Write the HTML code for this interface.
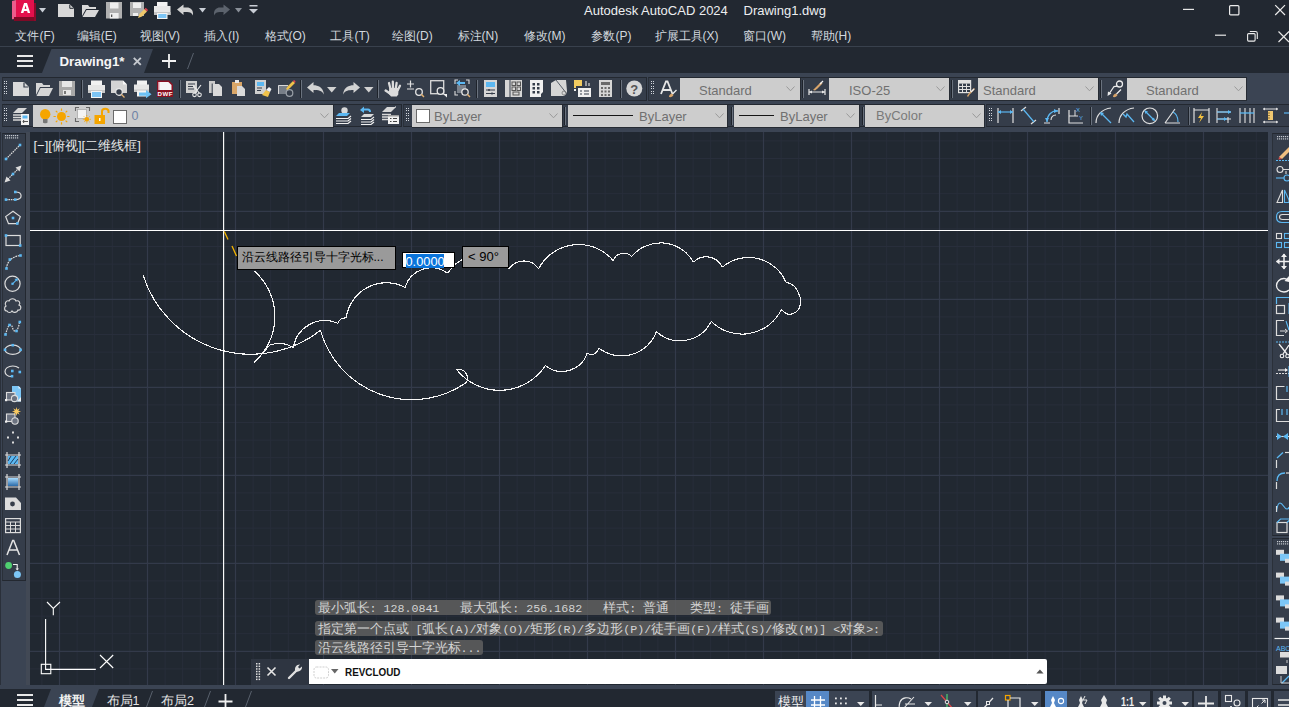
<!DOCTYPE html><html><head><meta charset="utf-8"><style>
*{box-sizing:border-box;margin:0;padding:0}
html,body{width:1289px;height:707px;overflow:hidden;background:#222831;font-family:"Liberation Sans",sans-serif;color:#d8dde3}
.a{position:absolute}
.t{position:absolute;white-space:nowrap;line-height:1}
svg{position:absolute;overflow:visible}
.mi{position:absolute;top:30px;font-size:12px;color:#d2d8df;white-space:nowrap;line-height:12px}
.tb{position:absolute;background:#363e4b;border:1px solid #262c35}
.cb{position:absolute;background:#cdcdcd;border-bottom:1px solid #2a2f37;border-right:1px solid #2a2f37}
.cbt{position:absolute;font-size:13px;color:#6f6f6f;white-space:nowrap;line-height:13px}
.sep{position:absolute;width:1px;background:#1c2128;border-right:1px solid #4a5363}
.hl{position:absolute;border-radius:3px;background:rgba(95,95,95,0.85)}
.ht{position:absolute;font-family:"Liberation Mono",monospace;font-size:11.65px;color:#d4d4d4;white-space:pre;line-height:13px}
.sg{position:absolute;top:691px;height:16px;background:#3b4453}
.tip{position:absolute;background:#9a9a9a;border:1px solid #000;color:#000;font-size:13px;white-space:nowrap;line-height:13px}
</style></head><body>
<div class="a" style="left:0;top:46px;width:1289px;height:1px;background:#39414d"></div>
<div class="a" style="left:0;top:73px;width:1289px;height:616px;background:#3b4453"></div>
<div class="a" style="left:30px;top:132px;width:1238px;height:553px;background:#212831"></div>
<div class="a" style="left:0;top:689px;width:1289px;height:18px;background:#222831"></div>
<div class="a" style="left:0;top:132px;width:1px;height:553px;background:#2a303a"></div>
<div class="a" style="left:26px;top:132px;width:4px;height:553px;background:#424955"></div>
<svg class="a" style="left:0;top:0" width="1289" height="707" viewBox="0 0 1289 707">
<defs><clipPath id="dc"><rect x="30" y="132" width="1238" height="553"/></clipPath></defs>
<g clip-path="url(#dc)">
<path d="M41.90 132V685 M77.10 132V685 M94.70 132V685 M112.30 132V685 M129.90 132V685 M165.10 132V685 M182.70 132V685 M200.30 132V685 M217.90 132V685 M253.10 132V685 M270.70 132V685 M288.30 132V685 M305.90 132V685 M341.10 132V685 M358.70 132V685 M376.30 132V685 M393.90 132V685 M429.10 132V685 M446.70 132V685 M464.30 132V685 M481.90 132V685 M517.10 132V685 M534.70 132V685 M552.30 132V685 M569.90 132V685 M605.10 132V685 M622.70 132V685 M640.30 132V685 M657.90 132V685 M693.10 132V685 M710.70 132V685 M728.30 132V685 M745.90 132V685 M781.10 132V685 M798.70 132V685 M816.30 132V685 M833.90 132V685 M869.10 132V685 M886.70 132V685 M904.30 132V685 M921.90 132V685 M957.10 132V685 M974.70 132V685 M992.30 132V685 M1009.90 132V685 M1045.10 132V685 M1062.70 132V685 M1080.30 132V685 M1097.90 132V685 M1133.10 132V685 M1150.70 132V685 M1168.30 132V685 M1185.90 132V685 M1221.10 132V685 M1238.70 132V685 M1256.30 132V685 M30 140.90H1268 M30 158.50H1268 M30 176.10H1268 M30 193.70H1268 M30 228.90H1268 M30 246.50H1268 M30 264.10H1268 M30 281.70H1268 M30 316.90H1268 M30 334.50H1268 M30 352.10H1268 M30 369.70H1268 M30 404.90H1268 M30 422.50H1268 M30 440.10H1268 M30 457.70H1268 M30 492.90H1268 M30 510.50H1268 M30 528.10H1268 M30 545.70H1268 M30 580.90H1268 M30 598.50H1268 M30 616.10H1268 M30 633.70H1268 M30 668.90H1268" stroke="#282e3b" stroke-width="1" fill="none"/>
<path d="M59.50 132V685 M147.50 132V685 M235.50 132V685 M323.50 132V685 M411.50 132V685 M499.50 132V685 M587.50 132V685 M675.50 132V685 M763.50 132V685 M851.50 132V685 M939.50 132V685 M1027.50 132V685 M1115.50 132V685 M1203.50 132V685 M30 211.30H1268 M30 299.30H1268 M30 387.30H1268 M30 475.30H1268 M30 563.30H1268 M30 651.30H1268" stroke="#333a4a" stroke-width="1.2" fill="none"/>
<path d="M143.10,275.10 A113.16,113.16 0 0 0 320.50,330.40 M320.50,330.40 A94.89,94.89 0 0 0 466.50,382.40 M466.50,382.40 A9.05,9.05 0 0 0 456.50,369.50 M456.50,369.50 A54.90,54.90 0 0 0 545.40,365.60 M545.40,365.60 A26.57,26.57 0 0 0 587.30,353.00 M587.30,353.00 A6.90,6.90 0 0 0 598.40,347.70 M598.40,347.70 A36.99,36.99 0 0 0 656.40,331.60 M656.40,331.60 A34.82,34.82 0 0 0 711.20,321.40 M711.20,321.40 A43.82,43.82 0 0 0 781.30,309.80 M781.3,309.8 C782.2,310.4 784.9,312.8 786.5,313.5 C788.1,314.2 789.0,314.9 791.0,314.3 C793.0,313.7 796.8,311.8 798.4,309.8 C800.0,307.8 800.4,304.6 800.6,302.4 C800.9,300.2 801.0,299.1 799.9,296.4 C798.8,293.7 796.4,288.4 794.0,286.0 C791.6,283.6 787.2,282.6 785.8,281.9 M785.80,281.90 A40.40,40.40 0 0 0 722.40,267.20 M722.40,267.20 A17.85,17.85 0 0 0 693.50,262.20 M693.50,262.20 A37.70,37.70 0 0 0 631.70,256.40 M631.70,256.40 A11.50,11.50 0 0 0 613.10,260.40 M613.10,260.40 A45.26,45.26 0 0 0 538.60,268.80 M538.60,268.80 A17.83,17.83 0 0 0 509.10,268.80 M509.1,268.8 C507.6,267.0 503.9,260.8 500.0,258.0 C496.1,255.2 490.7,252.8 486.0,252.0 C481.3,251.2 476.1,251.7 472.0,253.0 C467.9,254.3 464.4,258.1 461.6,260.0 C458.9,261.9 457.9,262.0 455.5,264.2 C453.1,266.4 448.8,271.7 447.5,273.2 M447.50,273.20 A27.30,27.30 0 0 0 405.10,287.40 M405.10,287.40 A40.46,40.46 0 0 0 346.20,317.90 M346.20,317.90 A8.51,8.51 0 0 0 337.70,323.30 M337.70,323.30 A31.71,31.71 0 0 0 293.40,347.80 M293.40,347.80 A26.58,26.58 0 0 0 269.60,345.20 M269.6,345.2 C267.1,348.1 256.9,359.5 254.3,362.4 M254.30,362.20 A60.71,60.71 0 0 0 254.50,271.20" stroke="#f6f6f6" stroke-width="1.1" fill="none" shape-rendering="crispEdges" stroke-linejoin="miter"/>
<path d="M223.6 132V685" stroke="#ffffff" stroke-width="1.15"/>
<path d="M30 230.5H1268" stroke="#ffffff" stroke-width="1.15"/>
<path d="M224.3 231.5L228 239.5M232 246L236.5 256" stroke="#f4b400" stroke-width="1.3"/>
<g stroke="#ffffff" stroke-width="1.1" fill="none"><rect x="41.3" y="664.3" width="9.5" height="9.4"/><path d="M45.6 619V669.4H95.8"/><path d="M47 602L53.3 608.4L60 602M53.3 608.4V615.2"/><path d="M100 655L113.2 668M113.2 655L100 668"/></g>
</g></svg>
<svg class="a" style="left:11px;top:0px" width="27" height="22" viewBox="0 0 27 22" ><path d="M1 1L5 0V17L2 19.5L1 19Z" fill="#ec5c8c"/><rect x="3" y="17" width="22" height="4" fill="#7e0a26"/><rect x="23" y="3" width="2" height="18" fill="#8c0a2b"/><rect x="5" y="0" width="18" height="17" fill="#e3104c"/><path d="M9.8 13.1L13.1 2.9H16L19.2 13.1H16.7L16.1 11H13L12.4 13.1ZM13.6 8.9H15.5L14.55 5.5Z" fill="#fff"/></svg>
<svg class="a" style="left:39px;top:8px" width="8" height="5" viewBox="0 0 8 5" ><path d="M0 0H7L3.5 4.5Z" fill="#c9ced6"/></svg>
<svg class="a" style="left:58px;top:4px" width="17" height="13" viewBox="0 0 17 13" ><path d="M0 0H11.5L16 4.5V13H0Z" fill="#d8d8d8"/><path d="M11.8 0.6V4.3H15.5" fill="none" stroke="#222831" stroke-width="1"/></svg>
<svg class="a" style="left:82px;top:4px" width="17" height="13" viewBox="0 0 17 13" ><path d="M0 1H6L7.5 3H14V5H4L0 12Z" fill="#d8d8d8"/><path d="M4.5 6H17L13 13H0.5Z" fill="#d8d8d8"/></svg>
<svg class="a" style="left:106px;top:2px" width="16" height="17" viewBox="0 0 16 17" ><path d="M0 0H16V16.5H0Z" fill="#b0b0b0"/><rect x="4" y="0.5" width="8.5" height="6" fill="#eeeeee"/><rect x="3.8" y="11" width="8.8" height="5.5" fill="#eeeeee"/><rect x="5" y="12.5" width="1.3" height="2.5" fill="#555"/></svg>
<svg class="a" style="left:130px;top:2px" width="18" height="17" viewBox="0 0 18 17" ><path d="M0 0H14V14H0Z" fill="#b0b0b0"/><rect x="3" y="0.5" width="8" height="5.5" fill="#eeeeee"/><rect x="3" y="11" width="5" height="3" fill="#eeeeee"/><path d="M8 16L9.5 12L14.5 7L17 9.5L12 14.5Z" fill="#f0c86a"/><path d="M14.5 7L15.7 5.8L18 8L17 9.5Z" fill="#e04050"/></svg>
<svg class="a" style="left:154px;top:1px" width="17" height="18" viewBox="0 0 17 18" ><rect x="3" y="1" width="10.5" height="5" fill="#f2f2f2"/><rect x="0" y="5" width="16.5" height="9" fill="#e8e8e8"/><rect x="0" y="11" width="16.5" height="3" fill="#c4c4c4"/><rect x="3" y="12" width="10.5" height="6" fill="#f4f4f4"/><rect x="4.2" y="13" width="8.2" height="4" fill="#7cc4f4"/></svg>
<svg class="a" style="left:177px;top:4px" width="18" height="13" viewBox="0 0 18 13" ><path d="M0 5.5L6.5 0.5V3.5H10C13.5 3.5 16 6 16 9.5V11.5C15 9 13 8 10 8H6.5V11Z" fill="#d2d2d2"/></svg>
<svg class="a" style="left:199px;top:8px" width="8" height="5" viewBox="0 0 8 5" ><path d="M0 0H7L3.5 4.5Z" fill="#c9ced6"/></svg>
<svg class="a" style="left:213px;top:4px" width="18" height="13" viewBox="0 0 18 13" ><path d="M17 5.5L10.5 0.5V3.5H7C3.5 3.5 1 6 1 9.5V11.5C2 9 4 8 7 8H10.5V11Z" fill="#5c636d"/></svg>
<svg class="a" style="left:235px;top:8px" width="8" height="5" viewBox="0 0 8 5" ><path d="M0 0H7L3.5 4.5Z" fill="#8a9099"/></svg>
<svg class="a" style="left:249px;top:5px" width="10" height="9" viewBox="0 0 10 9" ><rect x="0.5" y="0" width="8" height="1.5" fill="#c9ced6"/><path d="M0 4H9L4.5 8.5Z" fill="#c9ced6"/></svg>
<div class="t" style="left:584px;top:3.5px;font-size:13px;color:#eceef0">Autodesk AutoCAD 2024</div>
<div class="t" style="left:743.5px;top:3.5px;font-size:13px;color:#eceef0">Drawing1.dwg</div>
<svg class="a" style="left:1182px;top:8px" width="14" height="3" viewBox="0 0 14 3" ><rect x="1" y="0.8" width="11" height="1.2" fill="#e6e6e6"/></svg>
<svg class="a" style="left:1228px;top:4px" width="13" height="13" viewBox="0 0 13 13" ><rect x="1.6" y="1.6" width="9.3" height="9.3" rx="1" fill="none" stroke="#ececec" stroke-width="1.2"/></svg>
<svg class="a" style="left:1273px;top:3px" width="15" height="15" viewBox="0 0 15 15" ><path d="M2.2 2.2L12 12M12 2.2L2.2 12" stroke="#ececec" stroke-width="1.2"/></svg>
<svg class="a" style="left:1214px;top:34px" width="13" height="3" viewBox="0 0 13 3" ><rect x="1" y="0.6" width="11" height="1.2" fill="#e6e6e6"/></svg>
<svg class="a" style="left:1246px;top:30px" width="13" height="13" viewBox="0 0 13 13" ><rect x="1.6" y="3.6" width="7.5" height="7.5" rx="1" fill="none" stroke="#ececec" stroke-width="1.1"/><path d="M3.8 1.5H9.5C10.5 1.5 11.3 2.3 11.3 3.3V9" fill="none" stroke="#ececec" stroke-width="1.1"/></svg>
<svg class="a" style="left:1277px;top:30px" width="14" height="13" viewBox="0 0 14 13" ><path d="M1.5 1.5L12 12M12 1.5L1.5 12" stroke="#e6e6e6" stroke-width="1.2"/></svg>
<div class="mi" style="left:15.4px">文件(F)</div>
<div class="mi" style="left:76.8px">编辑(E)</div>
<div class="mi" style="left:140.0px">视图(V)</div>
<div class="mi" style="left:204.0px">插入(I)</div>
<div class="mi" style="left:264.5px">格式(O)</div>
<div class="mi" style="left:330.4px">工具(T)</div>
<div class="mi" style="left:392.0px">绘图(D)</div>
<div class="mi" style="left:457.6px">标注(N)</div>
<div class="mi" style="left:523.5px">修改(M)</div>
<div class="mi" style="left:591.4px">参数(P)</div>
<div class="mi" style="left:654.6px">扩展工具(X)</div>
<div class="mi" style="left:742.7px">窗口(W)</div>
<div class="mi" style="left:810.6px">帮助(H)</div>
<svg class="a" style="left:17px;top:55px" width="17" height="13" viewBox="0 0 17 13" ><rect x="0" y="0" width="16" height="2" fill="#e8e8e8"/><rect x="0" y="5" width="16" height="2" fill="#e8e8e8"/><rect x="0" y="10" width="16" height="2" fill="#e8e8e8"/></svg>
<svg class="a" style="left:40px;top:49px" width="116" height="25" viewBox="0 0 116 25" ><path d="M11.5 0H113L104 24H2Z" fill="#3b4453"/></svg>
<div class="t" style="left:59.5px;top:54.5px;font-size:13.3px;font-weight:bold;color:#f6f6f6">Drawing1*</div>
<svg class="a" style="left:132px;top:56px" width="10" height="10" viewBox="0 0 10 10" ><path d="M1.8 1.8L8.8 8.8M8.8 1.8L1.8 8.8" stroke="#c4c8ce" stroke-width="1.9"/></svg>
<svg class="a" style="left:161px;top:53px" width="16" height="16" viewBox="0 0 16 16" ><path d="M8 1V15M1 8H15" stroke="#f2f2f2" stroke-width="1.8"/></svg>
<svg class="a" style="left:186px;top:52px" width="9" height="18" viewBox="0 0 9 18" ><path d="M7.5 1L1.5 17" stroke="#59616d" stroke-width="1"/></svg>
<div class="a" style="left:2px;top:77px;width:645px;height:24px;background:#353d4a;border:1px solid #232830;border-left-color:#2a3039"></div>
<div class="a" style="left:648px;top:77px;width:599px;height:24px;background:#353d4a;border:1px solid #232830;border-left-color:#2a3039"></div>
<svg class="a" style="left:0;top:0" width="1289" height="707" viewBox="0 0 1289 707"><rect x="4" y="81" width="1" height="1" fill="#d4d8de"/><rect x="6" y="81" width="1" height="1" fill="#d4d8de"/><rect x="4" y="83" width="1" height="1" fill="#d4d8de"/><rect x="6" y="83" width="1" height="1" fill="#d4d8de"/><rect x="4" y="86" width="1" height="1" fill="#d4d8de"/><rect x="6" y="86" width="1" height="1" fill="#d4d8de"/><rect x="4" y="88" width="1" height="1" fill="#d4d8de"/><rect x="6" y="88" width="1" height="1" fill="#d4d8de"/><rect x="4" y="91" width="1" height="1" fill="#d4d8de"/><rect x="6" y="91" width="1" height="1" fill="#d4d8de"/><rect x="4" y="93" width="1" height="1" fill="#d4d8de"/><rect x="6" y="93" width="1" height="1" fill="#d4d8de"/></svg>
<svg class="a" style="left:13px;top:80px" width="17" height="17" viewBox="0 0 17 17" ><path d="M0 2H11L16 7V16H0Z" fill="#dadada"/><path d="M11 2.5V7H15.5" fill="none" stroke="#353d4a" stroke-width="1.2"/></svg>
<svg class="a" style="left:36px;top:80px" width="17" height="17" viewBox="0 0 17 17" ><path d="M0 3H6L7.5 5H14V7H4L0 15Z" fill="#d6d6d6"/><path d="M4.5 8H17L13 16H0.5Z" fill="#d6d6d6"/></svg>
<svg class="a" style="left:59px;top:80px" width="17" height="17" viewBox="0 0 17 17" ><path d="M0 1H16V16H0Z" fill="#a8a8a8"/><rect x="3" y="1" width="10" height="6" fill="#e6e6e6"/><rect x="4" y="10" width="8" height="5" fill="#e6e6e6"/><rect x="5" y="11" width="2" height="3" fill="#777"/></svg>
<div class="a" style="left:81px;top:80px;width:2px;height:18px;background:#1e232b;border-right:1px solid #6a727e"></div>
<svg class="a" style="left:88px;top:80px" width="17" height="18" viewBox="0 0 17 18" ><rect x="3" y="0.5" width="11" height="5" fill="#f2f2f2"/><rect x="0" y="5" width="17" height="8" fill="#e6e6e6"/><rect x="0" y="10" width="17" height="3" fill="#c8c8c8"/><rect x="3" y="11" width="11" height="7" fill="#f4f4f4"/><rect x="4" y="12" width="9" height="5" fill="#7cc4f4"/></svg>
<svg class="a" style="left:111px;top:80px" width="17" height="18" viewBox="0 0 17 18" ><path d="M0 0.5H12L16 4.5V13H0Z" fill="#d4d4d4"/><path d="M12 0.5L16 4.5H12Z" fill="#f8f8f8"/><circle cx="8" cy="12" r="3.3" fill="#353d4a" stroke="#e8e8e8" stroke-width="1.2"/><path d="M10.4 14.4L13.5 17.5" stroke="#e2b070" stroke-width="1.3"/></svg>
<svg class="a" style="left:134px;top:80px" width="18" height="18" viewBox="0 0 18 18" ><rect x="3" y="0.5" width="10" height="4.5" fill="#f2f2f2"/><rect x="0" y="4.5" width="15" height="7.5" fill="#e6e6e6"/><rect x="0" y="9.5" width="15" height="2.5" fill="#c8c8c8"/><rect x="3" y="10.5" width="9" height="6" fill="#f4f4f4"/><path d="M5 12.5H12V10L17.5 14.2L12 18.2V15.8H5Z" fill="#6cc0f4"/></svg>
<svg class="a" style="left:157px;top:80px" width="17" height="18" viewBox="0 0 17 18" ><path d="M0 0.5H12L16 4.5V17H0Z" fill="#8a1022"/><path d="M1.5 2H11.4L14.5 5.1V10H1.5Z" fill="#f6f6f6"/><rect x="1.5" y="2" width="1" height="8" fill="#e8a0b0"/><text x="8.2" y="15.6" font-size="6.2" font-weight="bold" fill="#fff" text-anchor="middle" font-family="Liberation Sans" letter-spacing="0.4">DWF</text></svg>
<div class="a" style="left:179px;top:80px;width:2px;height:18px;background:#1e232b;border-right:1px solid #6a727e"></div>
<svg class="a" style="left:186px;top:80px" width="17" height="17" viewBox="0 0 17 17" ><path d="M0 1H11V13H0Z" fill="#d0d0d0"/><path d="M2 4H9M2 6.5H7M2 9H8" stroke="#353d4a" stroke-width="1"/><path d="M7 5L13.5 13.5M15 5L8.5 13.5" stroke="#e8e8e8" stroke-width="1.2"/><circle cx="8.5" cy="14.8" r="1.8" fill="none" stroke="#e8e8e8" stroke-width="1.1"/><circle cx="13.5" cy="14.8" r="1.8" fill="none" stroke="#e8e8e8" stroke-width="1.1"/></svg>
<svg class="a" style="left:209px;top:80px" width="14" height="17" viewBox="0 0 14 17" ><path d="M0 1H6V13H0Z" fill="#c9c9c9"/><path d="M4 4H10L13 7V16H4Z" fill="#dadada"/><path d="M3.2 3.5V14.5" stroke="#353d4a" stroke-width="1"/></svg>
<svg class="a" style="left:232px;top:79px" width="14" height="18" viewBox="0 0 14 18" ><path d="M0 3H10V15H0Z" fill="#d9a668"/><rect x="3" y="1" width="4" height="3" fill="#e8e8e8"/><path d="M5 7H10L13 10V17H5Z" fill="#dadada"/></svg>
<svg class="a" style="left:255px;top:80px" width="17" height="17" viewBox="0 0 17 17" ><path d="M0 0H11V14H0Z" fill="#d0d0d0"/><rect x="2" y="2" width="7" height="4" fill="#5cb8f2"/><path d="M2 8H7M2 10.5H6" stroke="#353d4a" stroke-width="1"/><path d="M7 15L11 10L15 12L13 17Z" fill="#f0c24a"/><path d="M11 10L14 7L16.5 9L15 12Z" fill="#f4f4f4"/></svg>
<svg class="a" style="left:278px;top:80px" width="17" height="17" viewBox="0 0 17 17" ><path d="M0 5H10V14H0Z" fill="#777e88"/><path d="M0.5 5.5H10M0.5 5.5V14" fill="none" stroke="#d8d8d8" stroke-width="1"/><circle cx="11.5" cy="13" r="3.3" fill="#353d4a" stroke="#9aa0a8" stroke-width="1.2"/><path d="M8 9L10 6L15 1L17 3L12 8L9.5 10Z" fill="#f0c24a"/><path d="M15 1L16 0L17.5 1.3L17 3Z" fill="#e04050"/></svg>
<div class="a" style="left:300px;top:80px;width:2px;height:18px;background:#1e232b;border-right:1px solid #6a727e"></div>
<svg class="a" style="left:307px;top:82px" width="17" height="13" viewBox="0 0 17 13" ><path d="M0 5.5L6.5 0V3.3C11 3.3 16 5 17 12.5C15 8.5 11 8 6.5 8V11Z" fill="#d2d2d2"/></svg>
<svg class="a" style="left:327px;top:87px" width="10" height="6" viewBox="0 0 10 6" ><path d="M0 0H9.5L4.75 5.5Z" fill="#d2d2d2"/></svg>
<svg class="a" style="left:343px;top:82px" width="17" height="13" viewBox="0 0 17 13" ><path d="M17 5.5L10.5 0V3.3C6 3.3 1 5 0 12.5C2 8.5 6 8 10.5 8V11Z" fill="#d2d2d2"/></svg>
<svg class="a" style="left:364px;top:87px" width="10" height="6" viewBox="0 0 10 6" ><path d="M0 0H9.5L4.75 5.5Z" fill="#d2d2d2"/></svg>
<div class="a" style="left:377px;top:80px;width:2px;height:18px;background:#1e232b;border-right:1px solid #6a727e"></div>
<svg class="a" style="left:380px;top:76px" width="24" height="24" viewBox="0 0 24 24" ><g stroke="#dcdcdc" stroke-linecap="round" fill="none"><path d="M9 7L10.5 13M12.8 5.6L13 12.5M16.6 6.8L15.8 12.5M20 9.8L17.8 14" stroke-width="2.3"/><path d="M5.6 14.6L10 17.6" stroke-width="2.4"/></g><path d="M9.5 12H18.6L18.2 18.5L16.8 20.6H11L8.5 17.5Z" fill="#dcdcdc"/></svg>
<svg class="a" style="left:407px;top:80px" width="18" height="18" viewBox="0 0 18 18" ><path d="M0 4H7M3.5 0.5V7.5M0 9H7" stroke="#e0e0e0" stroke-width="1.2"/><circle cx="12" cy="12" r="3.3" fill="none" stroke="#e6e6e6" stroke-width="1.3"/><path d="M14.3 14.3L17 17" stroke="#e2b070" stroke-width="1.5"/></svg>
<svg class="a" style="left:430px;top:80px" width="18" height="18" viewBox="0 0 18 18" ><rect x="0.7" y="0.7" width="13" height="13" fill="none" stroke="#dcdcdc" stroke-width="1.3"/><circle cx="10.5" cy="11" r="3.3" fill="#353d4a" stroke="#e6e6e6" stroke-width="1.3"/><path d="M13 14L17 17.5V14Z" fill="#f0f0f0"/></svg>
<svg class="a" style="left:454px;top:79px" width="18" height="19" viewBox="0 0 18 19" ><path d="M1 5V1H4M12 1H15V5M1 12V16H4" fill="none" stroke="#dcdcdc" stroke-width="1.1"/><rect x="3" y="6" width="9" height="8" fill="#7b828c"/><path d="M2 4L6 1V3H11V5H6V7Z" fill="#5cb8f2"/><circle cx="11" cy="13" r="3.2" fill="#353d4a" stroke="#e6e6e6" stroke-width="1.3"/><path d="M13.3 15.3L16 18" stroke="#e2b070" stroke-width="1.4"/></svg>
<div class="a" style="left:476px;top:80px;width:2px;height:18px;background:#1e232b;border-right:1px solid #6a727e"></div>
<svg class="a" style="left:484px;top:80px" width="14" height="17" viewBox="0 0 14 17" ><path d="M0 0H13V17H0Z" fill="#d6d6d6"/><rect x="2" y="2" width="9" height="5" fill="#5cb8f2"/><path d="M2 10H11M2 13.5H11" stroke="#353d4a" stroke-width="1"/><path d="M5 9V11M8 12.5V14.5" stroke="#353d4a" stroke-width="1.4"/></svg>
<svg class="a" style="left:505px;top:80px" width="18" height="17" viewBox="0 0 18 17" ><path d="M0 0H17V17H0Z" fill="#d6d6d6"/><path d="M5 0V17" stroke="#353d4a" stroke-width="1"/><rect x="7" y="2" width="3.5" height="3.5" fill="none" stroke="#555" stroke-width="1"/><rect x="12" y="2" width="3.5" height="3.5" fill="none" stroke="#555" stroke-width="1"/><rect x="7" y="7" width="3.5" height="3.5" fill="none" stroke="#555" stroke-width="1"/><rect x="12" y="7" width="3.5" height="3.5" fill="none" stroke="#555" stroke-width="1"/><rect x="8" y="12" width="6" height="3" fill="none" stroke="#555" stroke-width="1"/></svg>
<svg class="a" style="left:530px;top:80px" width="14" height="17" viewBox="0 0 14 17" ><path d="M0 0H13V12L11 14V17H0Z" fill="#f0f0f0"/><g fill="#353d4a"><rect x="2.5" y="3" width="2.5" height="2.5"/><rect x="7" y="3" width="2.5" height="2.5"/><rect x="2.5" y="7" width="2.5" height="2.5"/><rect x="7" y="7" width="2.5" height="2.5"/><rect x="2.5" y="11" width="2.5" height="2.5"/><rect x="7" y="11" width="2.5" height="2.5"/></g></svg>
<svg class="a" style="left:551px;top:80px" width="17" height="17" viewBox="0 0 17 17" ><path d="M0 3L5 0H15L16 11C16 14 14 16 11 16H0Z" fill="#d6d6d6"/><path d="M5 0L16 14" stroke="#353d4a" stroke-width="0.8"/><circle cx="13" cy="13" r="2" fill="none" stroke="#7a7a7a" stroke-width="0.8"/></svg>
<svg class="a" style="left:574px;top:80px" width="18" height="17" viewBox="0 0 18 17" ><rect x="0" y="0" width="8" height="8" fill="#f2cc60"/><rect x="2" y="6" width="8" height="6" fill="#353d4a"/><rect x="4" y="8" width="13" height="9" fill="#f0f0f0"/><path d="M6 11H8M6 14H8M10 11H15M10 14H15" stroke="#353d4a" stroke-width="1.2"/><path d="M12 1V6M15 3V6" stroke="#b8b8b8" stroke-width="1.5"/><rect x="0" y="9" width="2" height="2" fill="#f0f0f0"/></svg>
<svg class="a" style="left:599px;top:80px" width="14" height="17" viewBox="0 0 14 17" ><rect x="0" y="0" width="13" height="17" fill="#d6d6d6"/><rect x="2" y="2" width="9" height="3" fill="#6a6a6a"/><g fill="#6a6a6a"><rect x="2" y="7" width="2" height="2"/><rect x="5.5" y="7" width="2" height="2"/><rect x="9" y="7" width="2" height="2"/><rect x="2" y="10.5" width="2" height="2"/><rect x="5.5" y="10.5" width="2" height="2"/><rect x="9" y="10.5" width="2" height="2"/><rect x="2" y="14" width="2" height="2"/><rect x="5.5" y="14" width="2" height="2"/><rect x="9" y="14" width="2" height="2"/></g></svg>
<div class="a" style="left:620px;top:80px;width:2px;height:18px;background:#1e232b;border-right:1px solid #6a727e"></div>
<svg class="a" style="left:626px;top:80px" width="17" height="17" viewBox="0 0 17 17" ><circle cx="8.3" cy="8.5" r="8" fill="#d6d6d6"/><text x="8.3" y="13.5" font-size="13" font-weight="bold" fill="#555" text-anchor="middle" font-family="Liberation Sans">?</text></svg>
<svg class="a" style="left:0;top:0" width="1289" height="707" viewBox="0 0 1289 707"><rect x="651" y="81" width="1" height="1" fill="#d4d8de"/><rect x="653" y="81" width="1" height="1" fill="#d4d8de"/><rect x="651" y="83" width="1" height="1" fill="#d4d8de"/><rect x="653" y="83" width="1" height="1" fill="#d4d8de"/><rect x="651" y="86" width="1" height="1" fill="#d4d8de"/><rect x="653" y="86" width="1" height="1" fill="#d4d8de"/><rect x="651" y="88" width="1" height="1" fill="#d4d8de"/><rect x="653" y="88" width="1" height="1" fill="#d4d8de"/><rect x="651" y="91" width="1" height="1" fill="#d4d8de"/><rect x="653" y="91" width="1" height="1" fill="#d4d8de"/><rect x="651" y="93" width="1" height="1" fill="#d4d8de"/><rect x="653" y="93" width="1" height="1" fill="#d4d8de"/></svg>
<svg class="a" style="left:660px;top:80px" width="17" height="18" viewBox="0 0 17 18" ><path d="M1 14L6 1.5H7.5L12.5 14M3 10H10.5" fill="none" stroke="#e6e6e6" stroke-width="1.8"/><path d="M9 17C9 15 10 14 12 13.5L13.5 15C13 16.5 11 17.5 9 17Z" fill="#d8a46a"/><path d="M12.5 14L16.5 10" stroke="#f0f0f0" stroke-width="1.3"/></svg>
<div class="a" style="left:680px;top:78px;width:121px;height:22.5px;background:#cdcdcd;border-right:1px solid #262b33;border-bottom:1px solid #262b33"></div>
<div class="t" style="left:699px;top:84px;font-size:13px;color:#707070">Standard</div>
<svg class="a" style="left:786px;top:86px" width="9" height="6" viewBox="0 0 9 6" ><path d="M0.5 0.5L4.5 4.8L8.5 0.5" fill="none" stroke="#9a9a9a" stroke-width="1"/></svg>
<div class="a" style="left:802px;top:80px;width:2px;height:18px;background:#1e232b;border-right:1px solid #6a727e"></div>
<svg class="a" style="left:808px;top:80px" width="18" height="17" viewBox="0 0 18 17" ><path d="M1 9V15M17 9V15M1 12H17" stroke="#e8e8e8" stroke-width="1.2"/><path d="M1 12L4 10.5V13.5Z M17 12L14 10.5V13.5Z" fill="#e8e8e8"/><path d="M5 10L8 7L13 2L14.5 3.5L9.5 8.5L7 10.5Z" fill="#d8a46a"/><path d="M12 4L15 1" stroke="#f0f0f0" stroke-width="1.3"/></svg>
<div class="a" style="left:829px;top:78px;width:121px;height:22.5px;background:#cdcdcd;border-right:1px solid #262b33;border-bottom:1px solid #262b33"></div>
<div class="t" style="left:849px;top:84px;font-size:13px;color:#707070">ISO-25</div>
<svg class="a" style="left:936px;top:86px" width="9" height="6" viewBox="0 0 9 6" ><path d="M0.5 0.5L4.5 4.8L8.5 0.5" fill="none" stroke="#9a9a9a" stroke-width="1"/></svg>
<div class="a" style="left:951px;top:80px;width:2px;height:18px;background:#1e232b;border-right:1px solid #6a727e"></div>
<svg class="a" style="left:958px;top:80px" width="17" height="17" viewBox="0 0 17 17" ><rect x="0.6" y="0.6" width="12" height="12" fill="none" stroke="#e0e0e0" stroke-width="1.2"/><rect x="0.6" y="0.6" width="12" height="3" fill="#e0e0e0"/><path d="M0.6 6.5H12.6M0.6 9.5H12.6M4.5 3.6V12.6M8.5 3.6V12.6" stroke="#e0e0e0" stroke-width="1"/><path d="M9 16L11 13L16 8L17 9L12 14L10 17Z" fill="#d8a46a"/><path d="M13 12L16 9" stroke="#f0f0f0" stroke-width="1.2"/></svg>
<div class="a" style="left:978px;top:78px;width:121px;height:22.5px;background:#cdcdcd;border-right:1px solid #262b33;border-bottom:1px solid #262b33"></div>
<div class="t" style="left:983px;top:84px;font-size:13px;color:#707070">Standard</div>
<svg class="a" style="left:1085px;top:86px" width="9" height="6" viewBox="0 0 9 6" ><path d="M0.5 0.5L4.5 4.8L8.5 0.5" fill="none" stroke="#9a9a9a" stroke-width="1"/></svg>
<div class="a" style="left:1100px;top:80px;width:2px;height:18px;background:#1e232b;border-right:1px solid #6a727e"></div>
<svg class="a" style="left:1106px;top:80px" width="18" height="18" viewBox="0 0 18 18" ><circle cx="13.5" cy="4" r="3" fill="none" stroke="#ececec" stroke-width="1.3"/><path d="M11.3 6.2L8 6.5L3 14" fill="none" stroke="#ececec" stroke-width="1.3"/><path d="M1.5 16L2 11.5L5.5 13.5Z" fill="#ececec"/><path d="M7 17C7 15 8 14 10 13.5L11.5 15C11 16.5 9 17.5 7 17Z" fill="#d8a46a"/><path d="M10.5 14L15 9.5" stroke="#f0f0f0" stroke-width="1.3"/></svg>
<div class="a" style="left:1127px;top:78px;width:120px;height:22.5px;background:#cdcdcd;border-right:1px solid #262b33;border-bottom:1px solid #262b33"></div>
<div class="t" style="left:1146px;top:84px;font-size:13px;color:#707070">Standard</div>
<svg class="a" style="left:1234px;top:86px" width="9" height="6" viewBox="0 0 9 6" ><path d="M0.5 0.5L4.5 4.8L8.5 0.5" fill="none" stroke="#9a9a9a" stroke-width="1"/></svg>
<div class="a" style="left:2px;top:104px;width:400px;height:23px;background:#353d4a;border:1px solid #232830;border-left-color:#2a3039"></div>
<div class="a" style="left:403px;top:104px;width:582px;height:23px;background:#353d4a;border:1px solid #232830;border-left-color:#2a3039"></div>
<div class="a" style="left:986px;top:104px;width:309px;height:23px;background:#353d4a;border:1px solid #232830;border-left-color:#2a3039"></div>
<svg class="a" style="left:0;top:0" width="1289" height="707" viewBox="0 0 1289 707"><rect x="4" y="108" width="1" height="1" fill="#d4d8de"/><rect x="6" y="108" width="1" height="1" fill="#d4d8de"/><rect x="4" y="110" width="1" height="1" fill="#d4d8de"/><rect x="6" y="110" width="1" height="1" fill="#d4d8de"/><rect x="4" y="113" width="1" height="1" fill="#d4d8de"/><rect x="6" y="113" width="1" height="1" fill="#d4d8de"/><rect x="4" y="115" width="1" height="1" fill="#d4d8de"/><rect x="6" y="115" width="1" height="1" fill="#d4d8de"/><rect x="4" y="118" width="1" height="1" fill="#d4d8de"/><rect x="6" y="118" width="1" height="1" fill="#d4d8de"/><rect x="4" y="120" width="1" height="1" fill="#d4d8de"/><rect x="6" y="120" width="1" height="1" fill="#d4d8de"/></svg>
<svg class="a" style="left:12px;top:107px" width="18" height="18" viewBox="0 0 18 18" ><path d="M1 6L6 1H15L10 6Z" fill="#d8d8d8"/><path d="M1 8H10M1 10.5H10M1 13H10" stroke="#d8d8d8" stroke-width="1.3"/><rect x="9" y="7" width="8" height="11" fill="#f2f2f2"/><rect x="10.5" y="8.5" width="5" height="3" fill="#5cb8f2"/><path d="M11 14.5H16M12 13L11 14.5L12 16" stroke="#555" stroke-width="1"/></svg>
<div class="a" style="left:33px;top:105px;width:301px;height:22.5px;background:#cdcdcd;border-right:1px solid #262b33;border-bottom:1px solid #262b33"></div>
<svg class="a" style="left:40px;top:109px" width="11" height="16" viewBox="0 0 11 16" ><circle cx="5.2" cy="5.2" r="5.2" fill="#f5a500"/><path d="M3 10H7.5V13.5C7.5 14.5 3 14.5 3 13.5Z" fill="#777"/></svg>
<svg class="a" style="left:53px;top:108px" width="17" height="17" viewBox="0 0 17 17" ><circle cx="8.5" cy="8.5" r="4.5" fill="#f5a500"/><path d="M8.5 0.5V2.8M8.5 14.2V16.5M0.5 8.5H2.8M14.2 8.5H16.5M2.8 2.8L4.4 4.4M12.6 12.6L14.2 14.2M14.2 2.8L12.6 4.4M4.4 12.6L2.8 14.2" stroke="#f5a500" stroke-width="1.2"/></svg>
<svg class="a" style="left:75px;top:107px" width="16" height="17" viewBox="0 0 16 17" ><path d="M0.5 4V0.5H4M11 0.5H14.5V4M0.5 11V14.5H4" fill="none" stroke="#666" stroke-width="1.1"/><rect x="2.5" y="2.5" width="9" height="9" fill="#f4f4f4" stroke="#9a9a9a" stroke-width="0.6"/><circle cx="11.8" cy="12.3" r="2.4" fill="#f5a500"/><path d="M11.8 8.2V9.2M11.8 15.4V16.4M7.8 12.3H8.8M14.8 12.3H15.8M9 9.5L9.7 10.2M14.6 9.5L13.9 10.2M9 15L9.7 14.4M14.6 15L13.9 14.4" stroke="#f5a500" stroke-width="0.9"/></svg>
<svg class="a" style="left:94px;top:107px" width="16" height="17" viewBox="0 0 16 17" ><rect x="0.5" y="8" width="10.5" height="9" fill="#f5a500"/><path d="M8 8V4.2C8 0.8 14.5 0.8 14.5 4.2V6" fill="none" stroke="#f5a500" stroke-width="2"/><rect x="5" y="11" width="1.5" height="3" fill="#fff"/></svg>
<div class="a" style="left:113px;top:110px;width:14px;height:14px;background:#fff;border:1px solid #6b6b6b"></div>
<div class="t" style="left:131.5px;top:110px;font-size:12.5px;color:#6f83a6">0</div>
<svg class="a" style="left:320px;top:113px" width="9" height="6" viewBox="0 0 9 6" ><path d="M0.5 0.5L4.5 4.8L8.5 0.5" fill="none" stroke="#9a9a9a" stroke-width="1"/></svg>
<svg class="a" style="left:335px;top:107px" width="18" height="18" viewBox="0 0 18 18" ><circle cx="9.5" cy="3.5" r="3.2" fill="#d8d8d8"/><path d="M1 9L4 6H15L12 9Z" fill="#5cb8f2"/><path d="M1 11.5H13L16 9M1 14H13L16 11.5M1 16.5H13L16 14" fill="none" stroke="#f0f0f0" stroke-width="1.2"/></svg>
<svg class="a" style="left:359px;top:106px" width="17" height="19" viewBox="0 0 17 19" ><path d="M1 4L5 0.5V2.5H9C11 2.5 12 4 12 6H10C10 5 9.5 4.5 8.5 4.5H5V7Z" fill="#5cb8f2"/><path d="M2 11L5 8H15L12 11Z" fill="#d8d8d8"/><path d="M2 13.5H12L15 11M2 16H12L15 13.5M2 18.5H12L15 16" fill="none" stroke="#f0f0f0" stroke-width="1.2"/></svg>
<svg class="a" style="left:381px;top:106px" width="18" height="19" viewBox="0 0 18 19" ><path d="M1 6L6 1H15L10 6Z" fill="#d8d8d8"/><path d="M1 8.5H10M1 11H10M1 13.5H8" stroke="#d8d8d8" stroke-width="1.3"/><path d="M13 2L15 0.5" stroke="#d8d8d8" stroke-width="1"/><rect x="7" y="9" width="11" height="9" fill="#f2f2f2"/><rect x="7" y="9" width="11" height="1.5" fill="#9a9a9a"/><path d="M9 12.5H10.5M9 15.5H10.5M12 12.5H16M12 15.5H16" stroke="#444" stroke-width="1.1"/></svg>
<svg class="a" style="left:0;top:0" width="1289" height="707" viewBox="0 0 1289 707"><rect x="406" y="108" width="1" height="1" fill="#d4d8de"/><rect x="408" y="108" width="1" height="1" fill="#d4d8de"/><rect x="406" y="110" width="1" height="1" fill="#d4d8de"/><rect x="408" y="110" width="1" height="1" fill="#d4d8de"/><rect x="406" y="113" width="1" height="1" fill="#d4d8de"/><rect x="408" y="113" width="1" height="1" fill="#d4d8de"/><rect x="406" y="115" width="1" height="1" fill="#d4d8de"/><rect x="408" y="115" width="1" height="1" fill="#d4d8de"/><rect x="406" y="118" width="1" height="1" fill="#d4d8de"/><rect x="408" y="118" width="1" height="1" fill="#d4d8de"/><rect x="406" y="120" width="1" height="1" fill="#d4d8de"/><rect x="408" y="120" width="1" height="1" fill="#d4d8de"/></svg>
<div class="a" style="left:412px;top:105px;width:150.5px;height:22.5px;background:#cdcdcd;border-right:1px solid #262b33;border-bottom:1px solid #262b33"></div>
<div class="a" style="left:416px;top:109px;width:14px;height:14px;background:#fff;border:1px solid #6b6b6b"></div>
<div class="t" style="left:434px;top:110px;font-size:13px;color:#707070">ByLayer</div>
<svg class="a" style="left:549px;top:113px" width="9" height="6" viewBox="0 0 9 6" ><path d="M0.5 0.5L4.5 4.8L8.5 0.5" fill="none" stroke="#9a9a9a" stroke-width="1"/></svg>
<div class="a" style="left:564px;top:107px;width:2px;height:18px;background:#1e232b;border-right:1px solid #6a727e"></div>
<div class="a" style="left:568px;top:105px;width:160px;height:22.5px;background:#cdcdcd;border-right:1px solid #262b33;border-bottom:1px solid #262b33"></div>
<div class="a" style="left:573px;top:115px;width:60px;height:1px;background:#151515"></div>
<div class="t" style="left:639px;top:110px;font-size:13px;color:#707070">ByLayer</div>
<svg class="a" style="left:715px;top:113px" width="9" height="6" viewBox="0 0 9 6" ><path d="M0.5 0.5L4.5 4.8L8.5 0.5" fill="none" stroke="#9a9a9a" stroke-width="1"/></svg>
<div class="a" style="left:731px;top:107px;width:2px;height:18px;background:#1e232b;border-right:1px solid #6a727e"></div>
<div class="a" style="left:734px;top:105px;width:126px;height:22.5px;background:#cdcdcd;border-right:1px solid #262b33;border-bottom:1px solid #262b33"></div>
<div class="a" style="left:739px;top:114.5px;width:35px;height:1px;background:#151515"></div>
<div class="t" style="left:780px;top:110px;font-size:13px;color:#707070">ByLayer</div>
<svg class="a" style="left:846px;top:113px" width="9" height="6" viewBox="0 0 9 6" ><path d="M0.5 0.5L4.5 4.8L8.5 0.5" fill="none" stroke="#9a9a9a" stroke-width="1"/></svg>
<div class="a" style="left:862px;top:107px;width:2px;height:18px;background:#1e232b;border-right:1px solid #6a727e"></div>
<div class="a" style="left:865px;top:105px;width:120px;height:22.5px;background:#cdcdcd;border-right:1px solid #262b33;border-bottom:1px solid #262b33"></div>
<div class="t" style="left:876px;top:109px;font-size:13px;color:#7a7a7a">ByColor</div>
<svg class="a" style="left:972px;top:113px" width="9" height="6" viewBox="0 0 9 6" ><path d="M0.5 0.5L4.5 4.8L8.5 0.5" fill="none" stroke="#9a9a9a" stroke-width="1"/></svg>
<svg class="a" style="left:0;top:0" width="1289" height="707" viewBox="0 0 1289 707"><rect x="989" y="108" width="1" height="1" fill="#d4d8de"/><rect x="991" y="108" width="1" height="1" fill="#d4d8de"/><rect x="989" y="110" width="1" height="1" fill="#d4d8de"/><rect x="991" y="110" width="1" height="1" fill="#d4d8de"/><rect x="989" y="113" width="1" height="1" fill="#d4d8de"/><rect x="991" y="113" width="1" height="1" fill="#d4d8de"/><rect x="989" y="115" width="1" height="1" fill="#d4d8de"/><rect x="991" y="115" width="1" height="1" fill="#d4d8de"/><rect x="989" y="118" width="1" height="1" fill="#d4d8de"/><rect x="991" y="118" width="1" height="1" fill="#d4d8de"/><rect x="989" y="120" width="1" height="1" fill="#d4d8de"/><rect x="991" y="120" width="1" height="1" fill="#d4d8de"/></svg>
<svg class="a" style="left:997px;top:107px" width="17" height="17" viewBox="0 0 17 17" ><path d="M1 1V16M16 1V16" stroke="#e0e0e0" stroke-width="1.2"/><path d="M1 5H16" stroke="#5cb8f2" stroke-width="1.2"/><path d="M1 5L4 3V7ZM16 5L13 3V7Z" fill="#5cb8f2"/></svg>
<svg class="a" style="left:1020px;top:107px" width="17" height="17" viewBox="0 0 17 17" ><path d="M1 4L6 0M11 17L16 13" stroke="#e0e0e0" stroke-width="1.2"/><path d="M3 2L14 15" stroke="#5cb8f2" stroke-width="1.2"/></svg>
<svg class="a" style="left:1043px;top:107px" width="18" height="17" viewBox="0 0 18 17" ><path d="M1 16H7M16 1V7" stroke="#e0e0e0" stroke-width="1.2"/><path d="M4 15C4 8 9 3 15 4" fill="none" stroke="#5cb8f2" stroke-width="1.3"/><path d="M8 13C8 10 10 8 13 8" fill="none" stroke="#e0e0e0" stroke-width="1.1"/><path d="M4 15L2 11H6Z M15 4L11 2V6Z" fill="#5cb8f2"/></svg>
<svg class="a" style="left:1066px;top:106px" width="18" height="18" viewBox="0 0 18 18" ><path d="M3 4V17H17M3 10H12" fill="none" stroke="#e0e0e0" stroke-width="1.2"/><path d="M9 4V10" stroke="#e0e0e0" stroke-width="1"/><text x="10" y="6" font-size="6" fill="#5cb8f2" font-family="Liberation Sans">X</text><text x="13" y="14" font-size="6" fill="#5cb8f2" font-family="Liberation Sans">Y</text></svg>
<div class="a" style="left:1090px;top:107px;width:2px;height:18px;background:#1e232b;border-right:1px solid #6a727e"></div>
<svg class="a" style="left:1095px;top:107px" width="18" height="17" viewBox="0 0 18 17" ><path d="M1 16C1 8 7 2 16 1" fill="none" stroke="#e0e0e0" stroke-width="1.2"/><path d="M6 6L16 16" stroke="#5cb8f2" stroke-width="1.3"/><path d="M5 5L9 6L6 9Z" fill="#5cb8f2"/></svg>
<svg class="a" style="left:1118px;top:107px" width="18" height="17" viewBox="0 0 18 17" ><path d="M1 16C1 8 7 2 16 1" fill="none" stroke="#e0e0e0" stroke-width="1.2"/><path d="M5 7L8 10L9 7L16 15" fill="none" stroke="#5cb8f2" stroke-width="1.3"/></svg>
<svg class="a" style="left:1141px;top:107px" width="18" height="18" viewBox="0 0 18 18" ><circle cx="8.8" cy="8.8" r="7.8" fill="none" stroke="#e0e0e0" stroke-width="1.2"/><path d="M4 4L13.5 13.5" stroke="#5cb8f2" stroke-width="1.3"/><path d="M3.5 3.5L7 4.5L4.5 7ZM14 14L10.5 13L13 10.5Z" fill="#5cb8f2"/></svg>
<svg class="a" style="left:1164px;top:107px" width="17" height="17" viewBox="0 0 17 17" ><path d="M1 16H16M1 16L11 2" stroke="#e0e0e0" stroke-width="1.2"/><path d="M9 5C13 7 14 11 14 15" fill="none" stroke="#5cb8f2" stroke-width="1.2"/></svg>
<div class="a" style="left:1188px;top:107px;width:2px;height:18px;background:#1e232b;border-right:1px solid #6a727e"></div>
<svg class="a" style="left:1193px;top:107px" width="17" height="17" viewBox="0 0 17 17" ><path d="M1 1V16M16 1V16M1 3H16" stroke="#e0e0e0" stroke-width="1.2"/><path d="M9 5L5 11H8L6 16L11 9H8Z" fill="#f2c040"/></svg>
<svg class="a" style="left:1216px;top:107px" width="16" height="17" viewBox="0 0 16 17" ><path d="M1 1V16M1 5H15M1 12H15" stroke="#e0e0e0" stroke-width="1.1"/><path d="M12 10V16" stroke="#e0e0e0" stroke-width="1.1"/><path d="M1 5H15M1 12H11" stroke="#5cb8f2" stroke-width="1.2"/><path d="M15 5L12 3V7Z M11 12L8 10V14Z" fill="#5cb8f2"/></svg>
<svg class="a" style="left:1239px;top:107px" width="16" height="17" viewBox="0 0 16 17" ><path d="M1 1V16M6 1V16M11 1V16M15 1V16" stroke="#e0e0e0" stroke-width="1.1"/><path d="M1 6H15" stroke="#5cb8f2" stroke-width="1.3"/></svg>
<svg class="a" style="left:1262px;top:107px" width="17" height="17" viewBox="0 0 17 17" ><path d="M1 2H16M1 15H16" stroke="#e0e0e0" stroke-width="1.2"/><path d="M1 2L3 0.5V3.5ZM16 2L14 0.5V3.5ZM1 15L3 13.5V16.5ZM16 15L14 13.5V16.5Z" fill="#e0e0e0"/><rect x="6" y="4" width="5" height="9" fill="#f0c870"/><path d="M6 6H8M6 8.5H8M6 11H8" stroke="#7a6030" stroke-width="0.8"/></svg>
<svg class="a" style="left:1284px;top:107px" width="5" height="17" viewBox="0 0 5 17" ><path d="M0 6H5" stroke="#5cb8f2" stroke-width="1.2"/></svg>
<div class="a" style="left:2px;top:133px;width:24px;height:448px;background:#353d4a;border:1px solid #232830;border-left-color:#2a3039"></div>
<svg class="a" style="left:5px;top:135px" width="14" height="4" viewBox="0 0 14 4" ><rect x="0.0" y="0.0" width="1.2" height="1.2" fill="#c6cad0"/><rect x="2.0" y="0.0" width="1.2" height="1.2" fill="#c6cad0"/><rect x="4.0" y="0.0" width="1.2" height="1.2" fill="#c6cad0"/><rect x="6.0" y="0.0" width="1.2" height="1.2" fill="#c6cad0"/><rect x="8.0" y="0.0" width="1.2" height="1.2" fill="#c6cad0"/><rect x="10.0" y="0.0" width="1.2" height="1.2" fill="#c6cad0"/><rect x="12.0" y="0.0" width="1.2" height="1.2" fill="#c6cad0"/><rect x="0.0" y="2.3" width="1.2" height="1.2" fill="#c6cad0"/><rect x="2.0" y="2.3" width="1.2" height="1.2" fill="#c6cad0"/><rect x="4.0" y="2.3" width="1.2" height="1.2" fill="#c6cad0"/><rect x="6.0" y="2.3" width="1.2" height="1.2" fill="#c6cad0"/><rect x="8.0" y="2.3" width="1.2" height="1.2" fill="#c6cad0"/><rect x="10.0" y="2.3" width="1.2" height="1.2" fill="#c6cad0"/><rect x="12.0" y="2.3" width="1.2" height="1.2" fill="#c6cad0"/></svg>
<svg class="a" style="left:0;top:0" width="30" height="600" viewBox="0 0 30 600"><path d="M6 159L20 145" stroke="#dcdcdc" stroke-width="1.2" stroke-dasharray="1.6 0.8"/><rect x="4.7" y="157.7" width="2.6" height="2.6" fill="#5cb8f2"/><rect x="18.7" y="143.7" width="2.6" height="2.6" fill="#5cb8f2"/><path d="M6 181L20.5 166.5" stroke="#dcdcdc" stroke-width="1.2" stroke-dasharray="1.6 0.8"/><path d="M21.5 165.5L15.5 167.5L19.5 171.5Z M4.5 182.5L6.5 176.5L10.5 180.5Z" fill="#dcdcdc"/><rect x="11.7" y="172.7" width="2.6" height="2.6" fill="#5cb8f2"/><path d="M6 199.6H15.3" stroke="#dcdcdc" stroke-width="1.2" stroke-dasharray="1.6 0.8"/><path d="M15.3 192C23 192 23 199.6 15.3 199.6" fill="none" stroke="#dcdcdc" stroke-width="1.2"/><rect x="4.7" y="198.3" width="2.6" height="2.6" fill="#5cb8f2"/><rect x="14.0" y="198.3" width="2.6" height="2.6" fill="#5cb8f2"/><rect x="14.0" y="190.7" width="2.6" height="2.6" fill="#5cb8f2"/><path d="M13 211.3L20.3 216.6L17.5 223.6H8.5L5.7 216.6Z" fill="none" stroke="#dcdcdc" stroke-width="1.2"/><rect x="11.7" y="216.7" width="2.6" height="2.6" fill="#5cb8f2"/><rect x="16.0" y="222.2" width="2.6" height="2.6" fill="#5cb8f2"/><rect x="6" y="235.5" width="14.2" height="10" fill="none" stroke="#dcdcdc" stroke-width="1.2"/><rect x="4.7" y="234.2" width="2.6" height="2.6" fill="#5cb8f2"/><rect x="18.9" y="244.2" width="2.6" height="2.6" fill="#5cb8f2"/><path d="M6.5 268.5C7 261 13 256 20.5 255.5" fill="none" stroke="#dcdcdc" stroke-width="1.2" stroke-dasharray="1.8 0.8"/><rect x="5.2" y="267.2" width="2.6" height="2.6" fill="#5cb8f2"/><rect x="19.2" y="254.2" width="2.6" height="2.6" fill="#5cb8f2"/><rect x="8.5" y="258.2" width="2.6" height="2.6" fill="#5cb8f2"/><circle cx="12.5" cy="283.8" r="7.6" fill="none" stroke="#dcdcdc" stroke-width="1.2"/><path d="M12.5 283.8L17 279.3" stroke="#5cb8f2" stroke-width="1.1"/><path d="M18 278.3L14.5 279L17.3 281.8Z" fill="#5cb8f2"/><rect x="11.4" y="282.7" width="2.2" height="2.2" fill="#5cb8f2"/><path d="M7 311C4 311 4 307 6 306C4 304 6 300 9 301C10 298 15 298 16 301C19 300 21 303 19 305C22 306 21 311 18 310C17 313 13 313 12 311C11 313 8 313 7 311Z" fill="none" stroke="#dcdcdc" stroke-width="1.1"/><path d="M5.5 334.5C7 330 8 325 10.5 325C13 325 12 331 15 331C18 331 19 325 19.5 322" fill="none" stroke="#dcdcdc" stroke-width="1.2" stroke-dasharray="1.6 0.9"/><rect x="4.2" y="333.2" width="2.6" height="2.6" fill="#5cb8f2"/><rect x="8.2" y="323.7" width="2.6" height="2.6" fill="#5cb8f2"/><rect x="15.2" y="329.7" width="2.6" height="2.6" fill="#5cb8f2"/><rect x="18.5" y="320.7" width="2.6" height="2.6" fill="#5cb8f2"/><ellipse cx="12.8" cy="349.8" rx="7.8" ry="4.6" fill="none" stroke="#dcdcdc" stroke-width="1.2"/><rect x="3.7" y="348.5" width="2.6" height="2.6" fill="#5cb8f2"/><rect x="19.3" y="348.5" width="2.6" height="2.6" fill="#5cb8f2"/><rect x="11.5" y="343.9" width="2.6" height="2.6" fill="#5cb8f2"/><path d="M19 368C17 366.5 15 366 12.8 366C8 366 5 368.5 5 371.5C5 374.5 8 376.5 11 376.5" fill="none" stroke="#dcdcdc" stroke-width="1.2"/><rect x="11.0" y="369.7" width="2.6" height="2.6" fill="#5cb8f2"/><rect x="18.5" y="370.7" width="2.6" height="2.6" fill="#5cb8f2"/><rect x="10.7" y="374.9" width="2.6" height="2.6" fill="#5cb8f2"/><path d="M12 386H18.5L21 388.5V401.5H12Z" fill="#7cc6f6"/><path d="M18.5 386L21 388.5H18.5Z" fill="#e8f4ff"/><path d="M21 397L17 401.5H21Z" fill="#f4f4f4"/><rect x="6.5" y="392.5" width="8.5" height="7.5" fill="#6b7280" stroke="#dcdcdc" stroke-width="1.1"/><rect x="5" y="399" width="2.2" height="2.2" fill="#f0f0f0"/><circle cx="14.5" cy="398.5" r="3.1" fill="#6b7280" stroke="#dcdcdc" stroke-width="1.1"/><rect x="6.5" y="414" width="8.5" height="7.5" fill="#6b7280" stroke="#dcdcdc" stroke-width="1.1"/><rect x="5" y="420.5" width="2.2" height="2.2" fill="#f0f0f0"/><circle cx="15" cy="421" r="3.2" fill="#6b7280" stroke="#dcdcdc" stroke-width="1.1"/><path d="M16.50,406.90 L17.23,409.74 L19.75,408.25 L18.26,410.77 L21.10,411.50 L18.26,412.23 L19.75,414.75 L17.23,413.26 L16.50,416.10 L15.77,413.26 L13.25,414.75 L14.74,412.23 L11.90,411.50 L14.74,410.77 L13.25,408.25 L15.77,409.74Z" fill="#f7c860"/><g fill="#dcdcdc"><rect x="12" y="431.5" width="2" height="2"/><rect x="7" y="436.5" width="2" height="2"/><rect x="17" y="436.5" width="2" height="2"/><rect x="12" y="441.5" width="2" height="2"/></g><path d="M7 452V468M19 452V468M5 455H21M5 465H21" stroke="#dcdcdc" stroke-width="1.2"/><rect x="8" y="456" width="10" height="8" fill="#5cb8f2"/><path d="M8 461L11 456M10 464L16 456M14 464L18 459" stroke="#1d3d60" stroke-width="1"/><path d="M7 474V490M19 474V490M5 477H21M5 487H21" stroke="#dcdcdc" stroke-width="1.2"/><defs><linearGradient id="gr" x1="0" y1="0" x2="0" y2="1"><stop offset="0" stop-color="#a8dcff"/><stop offset="1" stop-color="#2a6aa8"/></linearGradient></defs><rect x="8" y="478" width="10" height="8" fill="url(#gr)"/><path d="M5 497.5H16L21 503V510H5Z" fill="#dcdcdc"/><circle cx="12.5" cy="504" r="2.4" fill="#353d4a"/><rect x="5.6" y="518.6" width="14.8" height="14" fill="none" stroke="#dcdcdc" stroke-width="1.2"/><path d="M5.6 522H20.4M5.6 525.5H20.4M5.6 529H20.4M10.5 522V532.6M15.5 522V532.6" stroke="#dcdcdc" stroke-width="1"/><path d="M7 555L12.7 540.5H13.7L19.5 555M9 550H17.5" fill="none" stroke="#e4e4e4" stroke-width="1.5"/><circle cx="8.6" cy="565.5" r="3.4" fill="#4fcf70"/><circle cx="17.4" cy="574.5" r="3.5" fill="#7cc6f6"/><path d="M13 564.5H17.2V569" fill="none" stroke="#f0f0f0" stroke-width="1.1"/><path d="M15.5 568.5H19L17.2 570.5Z" fill="#f0f0f0"/></svg>
<div class="a" style="left:1272px;top:133px;width:23px;height:403px;background:#353d4a;border:1px solid #232830;border-left-color:#2a3039"></div>
<div class="a" style="left:1272px;top:538px;width:23px;height:147px;background:#353d4a;border:1px solid #232830;border-left-color:#2a3039"></div>
<svg class="a" style="left:1277px;top:135.5px" width="14" height="4" viewBox="0 0 14 4" ><rect x="0.0" y="0.0" width="1.2" height="1.2" fill="#c6cad0"/><rect x="2.0" y="0.0" width="1.2" height="1.2" fill="#c6cad0"/><rect x="4.0" y="0.0" width="1.2" height="1.2" fill="#c6cad0"/><rect x="6.0" y="0.0" width="1.2" height="1.2" fill="#c6cad0"/><rect x="8.0" y="0.0" width="1.2" height="1.2" fill="#c6cad0"/><rect x="10.0" y="0.0" width="1.2" height="1.2" fill="#c6cad0"/><rect x="12.0" y="0.0" width="1.2" height="1.2" fill="#c6cad0"/><rect x="0.0" y="2.3" width="1.2" height="1.2" fill="#c6cad0"/><rect x="2.0" y="2.3" width="1.2" height="1.2" fill="#c6cad0"/><rect x="4.0" y="2.3" width="1.2" height="1.2" fill="#c6cad0"/><rect x="6.0" y="2.3" width="1.2" height="1.2" fill="#c6cad0"/><rect x="8.0" y="2.3" width="1.2" height="1.2" fill="#c6cad0"/><rect x="10.0" y="2.3" width="1.2" height="1.2" fill="#c6cad0"/><rect x="12.0" y="2.3" width="1.2" height="1.2" fill="#c6cad0"/></svg>
<svg class="a" style="left:1277px;top:540.5px" width="14" height="4" viewBox="0 0 14 4" ><rect x="0.0" y="0.0" width="1.2" height="1.2" fill="#c6cad0"/><rect x="2.0" y="0.0" width="1.2" height="1.2" fill="#c6cad0"/><rect x="4.0" y="0.0" width="1.2" height="1.2" fill="#c6cad0"/><rect x="6.0" y="0.0" width="1.2" height="1.2" fill="#c6cad0"/><rect x="8.0" y="0.0" width="1.2" height="1.2" fill="#c6cad0"/><rect x="10.0" y="0.0" width="1.2" height="1.2" fill="#c6cad0"/><rect x="12.0" y="0.0" width="1.2" height="1.2" fill="#c6cad0"/><rect x="0.0" y="2.3" width="1.2" height="1.2" fill="#c6cad0"/><rect x="2.0" y="2.3" width="1.2" height="1.2" fill="#c6cad0"/><rect x="4.0" y="2.3" width="1.2" height="1.2" fill="#c6cad0"/><rect x="6.0" y="2.3" width="1.2" height="1.2" fill="#c6cad0"/><rect x="8.0" y="2.3" width="1.2" height="1.2" fill="#c6cad0"/><rect x="10.0" y="2.3" width="1.2" height="1.2" fill="#c6cad0"/><rect x="12.0" y="2.3" width="1.2" height="1.2" fill="#c6cad0"/></svg>
<svg class="a" style="left:0;top:0" width="1289" height="707" viewBox="0 0 1289 707"><path d="M1279 157L1289 147V152L1282 159Z" fill="#f0c080"/><path d="M1279 157L1282 159L1278.5 159.5Z" fill="#e04a4a"/><path d="M1276 160.5H1289" stroke="#5cb8f2" stroke-width="1" stroke-dasharray="2 1"/><circle cx="1280" cy="169.5" r="3" fill="none" stroke="#dcdcdc" stroke-width="1.1"/><path d="M1283 169.5H1289M1286 171V174" stroke="#dcdcdc" stroke-width="1.1"/><circle cx="1287" cy="178" r="3" fill="none" stroke="#5cb8f2" stroke-width="1.1"/><path d="M1276 178H1284" stroke="#5cb8f2" stroke-width="1.1"/><path d="M1277 202.5L1282.5 190V202.5Z" fill="none" stroke="#dcdcdc" stroke-width="1.1"/><path d="M1284.5 190L1289 200V202.5H1284.5Z" fill="none" stroke="#5cb8f2" stroke-width="1.1"/><path d="M1289 211.5H1282C1278 211.5 1276.5 213.5 1276.5 217C1276.5 220.5 1278 222.5 1282 222.5H1289" fill="none" stroke="#5cb8f2" stroke-width="1.2"/><path d="M1289 214.5H1282.5C1280.5 214.5 1279.5 215.5 1279.5 217C1279.5 218.5 1280.5 219.5 1282.5 219.5H1289" fill="none" stroke="#dcdcdc" stroke-width="1.1"/><rect x="1276.5" y="233.5" width="5" height="5" fill="none" stroke="#dcdcdc" stroke-width="1.1"/><rect x="1284.5" y="233.5" width="5" height="5" fill="none" stroke="#5cb8f2" stroke-width="1.1"/><rect x="1276.5" y="242.5" width="5" height="5" fill="none" stroke="#5cb8f2" stroke-width="1.1"/><rect x="1284.5" y="242.5" width="5" height="5" fill="none" stroke="#5cb8f2" stroke-width="1.1"/><path d="M1284 254V269M1276.5 261.5H1289" stroke="#f0f0f0" stroke-width="1.5"/><path d="M1284 253.5L1281 257H1287Z M1284 269.5L1281 266H1287Z M1276 261.5L1279.5 258.5V264.5Z" fill="#f0f0f0"/><path d="M1288 280C1286.5 279 1285 278.5 1284 278.5C1279.5 278.5 1276.5 282 1276.5 285.5C1276.5 289 1279.5 292 1284 292C1286 292 1288 291 1289 290" fill="none" stroke="#f0f0f0" stroke-width="1.3"/><path d="M1289 276L1289 282L1284.5 281Z" fill="#f0f0f0"/><path d="M1276.5 304V297.5H1289" fill="none" stroke="#5cb8f2" stroke-width="1.2"/><rect x="1276.5" y="305.5" width="8" height="8" fill="none" stroke="#dcdcdc" stroke-width="1.2"/><path d="M1289 303V314" stroke="#5cb8f2" stroke-width="1"/><path d="M1284 320.5H1276.5V335.5H1284" fill="none" stroke="#dcdcdc" stroke-width="1.2"/><path d="M1280 331H1287M1285 329L1287.5 331L1285 333" fill="none" stroke="#dcdcdc" stroke-width="1"/><path d="M1286 321L1289 330" stroke="#5cb8f2" stroke-width="1.1"/><path d="M1276 342H1289" stroke="#5cb8f2" stroke-width="1" stroke-dasharray="2 1"/><path d="M1279 344L1287 354M1289 345L1283 354" stroke="#f0f0f0" stroke-width="1.3"/><circle cx="1282" cy="356" r="1.8" fill="none" stroke="#f0f0f0" stroke-width="1.1"/><circle cx="1287.5" cy="356" r="1.8" fill="none" stroke="#f0f0f0" stroke-width="1.1"/><path d="M1276 373.5H1289" stroke="#dcdcdc" stroke-width="1" stroke-dasharray="2 1"/><path d="M1278 370H1287" stroke="#f0f0f0" stroke-width="1.1"/><path d="M1288 370L1285 368V372Z" fill="#f0f0f0"/><path d="M1289 366V377" stroke="#5cb8f2" stroke-width="1.1"/><path d="M1284.5 386.5H1276.5V399.5H1289" fill="none" stroke="#dcdcdc" stroke-width="1.2"/><path d="M1287 386V392" stroke="#5cb8f2" stroke-width="1.2"/><path d="M1280 409.5H1276.5V421.5H1289" fill="none" stroke="#dcdcdc" stroke-width="1.2"/><path d="M1282 409V415M1287 409V415" stroke="#5cb8f2" stroke-width="1.2"/><path d="M1276 436.5H1289" stroke="#dcdcdc" stroke-width="1.1"/><path d="M1277 433L1282 436.5L1277 440ZM1288 433L1283 436.5L1288 440Z" fill="#5cb8f2"/><path d="M1276.5 468V460" stroke="#dcdcdc" stroke-width="1.2"/><path d="M1277 458L1283 452.5" stroke="#5cb8f2" stroke-width="1.3"/><path d="M1285 452.5H1289" stroke="#dcdcdc" stroke-width="1.2"/><path d="M1276.5 489V482" stroke="#dcdcdc" stroke-width="1.2"/><path d="M1277 481C1277 476 1280 473 1285 473" fill="none" stroke="#5cb8f2" stroke-width="1.3"/><path d="M1286 473H1289" stroke="#dcdcdc" stroke-width="1.2"/><path d="M1276.5 512C1277 507 1278 503 1280 503C1283 503 1284 509 1287 509C1288 509 1289 508 1289 507" fill="none" stroke="#5cb8f2" stroke-width="1.2"/><path d="M1276.5 512V506" stroke="#dcdcdc" stroke-width="1.1"/><rect x="1277" y="522.5" width="10" height="10" fill="none" stroke="#dcdcdc" stroke-width="1.2"/><path d="M1277 522.5L1280.5 519H1289M1287 522.5L1289 520.5" fill="none" stroke="#5cb8f2" stroke-width="1.2"/><rect x="1276" y="549.8" width="8" height="5" fill="#dcdcdc"/><rect x="1280" y="553.8" width="9" height="7" fill="#7cc6f6"/><rect x="1285" y="558.8" width="4" height="4" fill="#dcdcdc"/><rect x="1276" y="572.6" width="8" height="5" fill="#dcdcdc"/><rect x="1280" y="576.6" width="9" height="7" fill="#7cc6f6"/><rect x="1285" y="581.6" width="4" height="4" fill="#dcdcdc"/><rect x="1276" y="595.4" width="8" height="5" fill="#dcdcdc"/><rect x="1280" y="599.4" width="9" height="7" fill="#7cc6f6"/><rect x="1285" y="604.4" width="4" height="4" fill="#dcdcdc"/><rect x="1276" y="617.6" width="8" height="5" fill="#dcdcdc"/><rect x="1280" y="621.6" width="9" height="7" fill="#7cc6f6"/><rect x="1285" y="626.6" width="4" height="4" fill="#dcdcdc"/><path d="M1274.5 638.5H1289" stroke="#f0f0f0" stroke-width="1.2"/><text x="1276" y="651" font-size="7" fill="#5cb8f2" font-family="Liberation Sans">ABC</text><rect x="1280" y="652" width="9" height="5.5" fill="#dcdcdc"/><path d="M1287 660V663" stroke="#ccc" stroke-width="1"/><rect x="1276" y="666" width="11" height="8" fill="#dcdcdc"/><path d="M1282 683L1289 676" stroke="#5cb8f2" stroke-width="1.2"/><path d="M1281 676V683H1289" fill="none" stroke="#dcdcdc" stroke-width="0.9"/></svg>
<div class="hl" style="left:315px;top:600px;width:456px;height:15px"></div>
<div class="ht" style="left:317.5px;top:601px"><span style="font-size:13px;font-family:'Liberation Sans',sans-serif">最小弧长</span>: 128.0841   <span style="font-size:13px;font-family:'Liberation Sans',sans-serif">最大弧长</span>: 256.1682   <span style="font-size:13px;font-family:'Liberation Sans',sans-serif">样式</span>: <span style="font-size:13px;font-family:'Liberation Sans',sans-serif">普通</span>   <span style="font-size:13px;font-family:'Liberation Sans',sans-serif">类型</span>: <span style="font-size:13px;font-family:'Liberation Sans',sans-serif">徒手画</span></div>
<div class="hl" style="left:315px;top:620.5px;width:568px;height:15px"></div>
<div class="ht" style="left:317.5px;top:621.5px"><span style="font-size:13px;font-family:'Liberation Sans',sans-serif">指定第一个点或</span> [<span style="font-size:13px;font-family:'Liberation Sans',sans-serif">弧长</span>(A)/<span style="font-size:13px;font-family:'Liberation Sans',sans-serif">对象</span>(O)/<span style="font-size:13px;font-family:'Liberation Sans',sans-serif">矩形</span>(R)/<span style="font-size:13px;font-family:'Liberation Sans',sans-serif">多边形</span>(P)/<span style="font-size:13px;font-family:'Liberation Sans',sans-serif">徒手画</span>(F)/<span style="font-size:13px;font-family:'Liberation Sans',sans-serif">样式</span>(S)/<span style="font-size:13px;font-family:'Liberation Sans',sans-serif">修改</span>(M)] &lt;<span style="font-size:13px;font-family:'Liberation Sans',sans-serif">对象</span>&gt;:</div>
<div class="hl" style="left:315px;top:640px;width:168px;height:14.5px"></div>
<div class="ht" style="left:317.5px;top:641px"><span style="font-size:13px;font-family:'Liberation Sans',sans-serif">沿云线路径引导十字光标</span>...</div>
<div class="a" style="left:251px;top:659px;width:58px;height:25.5px;background:#2e3541"></div>
<svg class="a" style="left:255.5px;top:663px" width="6" height="18" viewBox="0 0 6 18" ><rect x="0.0" y="0.0" width="1.5" height="1.5" fill="#e0e0e0"/><rect x="2.6" y="0.0" width="1.5" height="1.5" fill="#e0e0e0"/><rect x="0.0" y="2.6" width="1.5" height="1.5" fill="#e0e0e0"/><rect x="2.6" y="2.6" width="1.5" height="1.5" fill="#e0e0e0"/><rect x="0.0" y="5.2" width="1.5" height="1.5" fill="#e0e0e0"/><rect x="2.6" y="5.2" width="1.5" height="1.5" fill="#e0e0e0"/><rect x="0.0" y="7.8" width="1.5" height="1.5" fill="#e0e0e0"/><rect x="2.6" y="7.8" width="1.5" height="1.5" fill="#e0e0e0"/><rect x="0.0" y="10.4" width="1.5" height="1.5" fill="#e0e0e0"/><rect x="2.6" y="10.4" width="1.5" height="1.5" fill="#e0e0e0"/><rect x="0.0" y="13.0" width="1.5" height="1.5" fill="#e0e0e0"/><rect x="2.6" y="13.0" width="1.5" height="1.5" fill="#e0e0e0"/><rect x="0.0" y="15.6" width="1.5" height="1.5" fill="#e0e0e0"/><rect x="2.6" y="15.6" width="1.5" height="1.5" fill="#e0e0e0"/></svg>
<svg class="a" style="left:266px;top:666px" width="11" height="11" viewBox="0 0 11 11" ><path d="M1.5 1.5L9.5 9.5M9.5 1.5L1.5 9.5" stroke="#e6e6e6" stroke-width="1.6"/></svg>
<svg class="a" style="left:287px;top:663px" width="17" height="17" viewBox="0 0 17 17" ><path d="M2 15L9.5 7.5" stroke="#e0e0e0" stroke-width="2.4" stroke-linecap="round"/><path d="M8.5 8.5C7 5 9 1.5 13 1.5L11 4L12.5 5.5L15 3.5C15.5 7 12 9.5 8.5 8.5Z" fill="#e0e0e0"/></svg>
<div class="a" style="left:309px;top:659px;width:738px;height:25px;background:#ffffff;border-radius:0 2px 2px 0"></div>
<svg class="a" style="left:313px;top:665.5px" width="17" height="13" viewBox="0 0 17 13" ><rect x="1" y="1" width="14.5" height="11" rx="2.5" fill="none" stroke="#cfcfcf" stroke-width="1" stroke-dasharray="2 1"/></svg>
<svg class="a" style="left:331px;top:669px" width="8" height="5" viewBox="0 0 8 5" ><path d="M0 0H7.5L3.75 4.5Z" fill="#666"/></svg>
<div class="t" style="left:345px;top:666.5px;font-size:11.5px;font-weight:bold;color:#111;transform:scaleX(0.86);transform-origin:0 0">REVCLOUD</div>
<svg class="a" style="left:1036px;top:668.5px" width="9" height="5" viewBox="0 0 9 5" ><path d="M0.3 4.5L3.9 0.5L7.6 4.5Z" fill="#555"/></svg>
<svg class="a" style="left:17px;top:694px" width="17" height="13" viewBox="0 0 17 13" ><rect x="0" y="0" width="16" height="2" fill="#e8e8e8"/><rect x="0" y="5" width="16" height="2" fill="#e8e8e8"/><rect x="0" y="10" width="16" height="2" fill="#e8e8e8"/></svg>
<svg class="a" style="left:40px;top:689px" width="62" height="18" viewBox="0 0 62 18" ><path d="M11 0H59L52 18H4Z" fill="#3b4453"/></svg>
<div class="t" style="left:58.5px;top:694.5px;font-size:12.5px;color:#f4f4f4;font-weight:bold">模型</div>
<div class="t" style="left:106.5px;top:694.5px;font-size:12.5px;color:#e4e4e4">布局1</div>
<svg class="a" style="left:145px;top:690px" width="9" height="17" viewBox="0 0 9 17" ><path d="M7.5 1L1.5 17" stroke="#59616d" stroke-width="1"/></svg>
<div class="t" style="left:161px;top:694.5px;font-size:12.5px;color:#e4e4e4">布局2</div>
<svg class="a" style="left:203px;top:690px" width="9" height="17" viewBox="0 0 9 17" ><path d="M7.5 1L1.5 17" stroke="#59616d" stroke-width="1"/></svg>
<svg class="a" style="left:218px;top:693px" width="16" height="16" viewBox="0 0 16 16" ><path d="M7.5 1V16M0.5 8.5H14.5" stroke="#f0f0f0" stroke-width="1.8"/></svg>
<svg class="a" style="left:244px;top:690px" width="9" height="17" viewBox="0 0 9 17" ><path d="M7.5 1L1.5 17" stroke="#59616d" stroke-width="1"/></svg>
<div class="a" style="left:775px;top:691px;width:94px;height:16px;background:#3b4453"></div>
<div class="a" style="left:872px;top:691px;width:104px;height:16px;background:#3b4453"></div>
<div class="a" style="left:978px;top:691px;width:63px;height:16px;background:#3b4453"></div>
<div class="a" style="left:1045px;top:691px;width:105px;height:16px;background:#3b4453"></div>
<div class="a" style="left:1153px;top:691px;width:39px;height:16px;background:#3b4453"></div>
<div class="a" style="left:1194px;top:691px;width:24px;height:16px;background:#3b4453"></div>
<div class="a" style="left:1221px;top:691px;width:24px;height:16px;background:#3b4453"></div>
<div class="a" style="left:1248px;top:691px;width:23px;height:16px;background:#3b4453"></div>
<div class="a" style="left:1274px;top:691px;width:15px;height:16px;background:#3b4453"></div>
<div class="a" style="left:806px;top:691px;width:23px;height:16px;background:#5688c6"></div>
<div class="a" style="left:1045px;top:691px;width:22px;height:16px;background:#5688c6"></div>
<div class="t" style="left:778px;top:695.5px;font-size:12.5px;color:#f0f0f0">模型</div>
<div class="t" style="left:1121px;top:696px;font-size:12.5px;font-weight:bold;color:#f0f0f0;transform:scaleX(0.72);transform-origin:0 0">1:1</div>
<svg class="a" style="left:0;top:1.5px" width="1289" height="707" viewBox="0 0 1289 707"><path d="M811 698H825M811 703H825M814.5 694V707M820.5 694V707" stroke="#ffffff" stroke-width="1.3"/><rect x="835" y="695.5" width="1.8" height="1.8" fill="#e8e8e8"/><rect x="840" y="695.5" width="1.8" height="1.8" fill="#e8e8e8"/><rect x="845" y="695.5" width="1.8" height="1.8" fill="#e8e8e8"/><rect x="835" y="700.5" width="1.8" height="1.8" fill="#e8e8e8"/><rect x="840" y="700.5" width="1.8" height="1.8" fill="#e8e8e8"/><rect x="845" y="700.5" width="1.8" height="1.8" fill="#e8e8e8"/><path d="M857 700H864.5L860.75 704Z" fill="#e8e8e8"/><path d="M875.5 693V707M875.5 703H882" stroke="#e8e8e8" stroke-width="1.2"/><path d="M911 697C908 695 902 695 900 700C899 703 899 706 900 707" fill="none" stroke="#e8e8e8" stroke-width="1.2"/><path d="M903 707L914 695M905 702H915" stroke="#e8e8e8" stroke-width="1.1"/><path d="M924.5 700H932L928.25 704Z" fill="#e8e8e8"/><path d="M941 693L953 707" stroke="#e04848" stroke-width="1.2"/><path d="M947 692V707" stroke="#4fcf70" stroke-width="1.2"/><circle cx="947" cy="700" r="1.8" fill="#3b4453" stroke="#e8e8e8" stroke-width="1"/><path d="M964 700H971.5L967.75 704Z" fill="#e8e8e8"/><path d="M983 707L993 696" stroke="#e8e8e8" stroke-width="1.2"/><rect x="986.5" y="699.5" width="3" height="3" fill="#3b4453" stroke="#e8e8e8" stroke-width="1"/><rect x="1005.5" y="693.5" width="4.5" height="4.5" fill="none" stroke="#f5a500" stroke-width="1.2"/><path d="M1010 696H1020V707M1008 698V707" fill="none" stroke="#e8e8e8" stroke-width="1.2"/><path d="M1031 700H1038.5L1034.75 704Z" fill="#e8e8e8"/><path d="M1049 707L1052 701L1051 698L1053 694L1055 698L1054 701L1057 707Z" fill="#ffffff"/><circle cx="1061" cy="699" r="2.6" fill="none" stroke="#ffffff" stroke-width="1.1"/><path d="M1077 707L1080 701L1079 698L1081 694L1083 698L1082 701L1085 707Z" fill="#e8e8e8"/><path d="M1085 694L1083 698H1087L1085 702" fill="none" stroke="#e8e8e8" stroke-width="1"/><path d="M1099 707L1102 701L1101 698L1104 693L1107 698L1106 701L1109 707Z" fill="#e8e8e8"/><path d="M1139 700H1146.5L1142.75 704Z" fill="#e8e8e8"/><circle cx="1164.5" cy="701" r="5.2" fill="#e8e8e8"/><circle cx="1164.5" cy="701" r="2" fill="#3b4453"/><rect x="1163" y="693.5" width="3" height="3" fill="#e8e8e8" transform="rotate(0 1164.5 701)"/><rect x="1163" y="693.5" width="3" height="3" fill="#e8e8e8" transform="rotate(45 1164.5 701)"/><rect x="1163" y="693.5" width="3" height="3" fill="#e8e8e8" transform="rotate(90 1164.5 701)"/><rect x="1163" y="693.5" width="3" height="3" fill="#e8e8e8" transform="rotate(135 1164.5 701)"/><rect x="1163" y="693.5" width="3" height="3" fill="#e8e8e8" transform="rotate(180 1164.5 701)"/><rect x="1163" y="693.5" width="3" height="3" fill="#e8e8e8" transform="rotate(225 1164.5 701)"/><rect x="1163" y="693.5" width="3" height="3" fill="#e8e8e8" transform="rotate(270 1164.5 701)"/><rect x="1163" y="693.5" width="3" height="3" fill="#e8e8e8" transform="rotate(315 1164.5 701)"/><path d="M1181.5 700H1189L1185.25 704Z" fill="#e8e8e8"/><path d="M1206 694V707M1198 701.5H1214" stroke="#e8e8e8" stroke-width="1.8"/><rect x="1225.5" y="693.5" width="6" height="6" fill="none" stroke="#e8e8e8" stroke-width="1.1"/><circle cx="1237" cy="701" r="3" fill="none" stroke="#e8e8e8" stroke-width="1.1"/><path d="M1229 707L1231 704L1233 707" fill="none" stroke="#e8e8e8" stroke-width="1"/><rect x="1252.5" y="696.5" width="15" height="12" fill="none" stroke="#e8e8e8" stroke-width="1.1"/><path d="M1262 698H1265V701M1265 698L1261.5 701.5M1255 707L1258.5 703.5" fill="none" stroke="#e8e8e8" stroke-width="1"/><path d="M1278 698H1289M1278 703H1289" stroke="#e8e8e8" stroke-width="1.4"/></svg>
<div class="t" style="left:33.5px;top:138.5px;font-size:13px;color:#e8e8e8">[−][俯视][二维线框]</div>
<div class="tip" style="left:237px;top:246px;width:159px;height:24px;padding:3.5px 0 0 3.5px;font-size:12px;line-height:12px">沿云线路径引导十字光标...</div>
<div class="a" style="left:402px;top:252px;width:53px;height:16px;background:#fff;border:1px solid #000"></div>
<div class="a" style="left:406px;top:254px;width:38px;height:14px;background:#0a74da"></div>
<div class="t" style="left:405.5px;top:256px;font-size:12.8px;color:#fff">0.0000</div>
<div class="tip" style="left:462px;top:246px;width:47px;height:22px;padding:3px 0 0 5px">&lt; 90°</div>
</body></html>
